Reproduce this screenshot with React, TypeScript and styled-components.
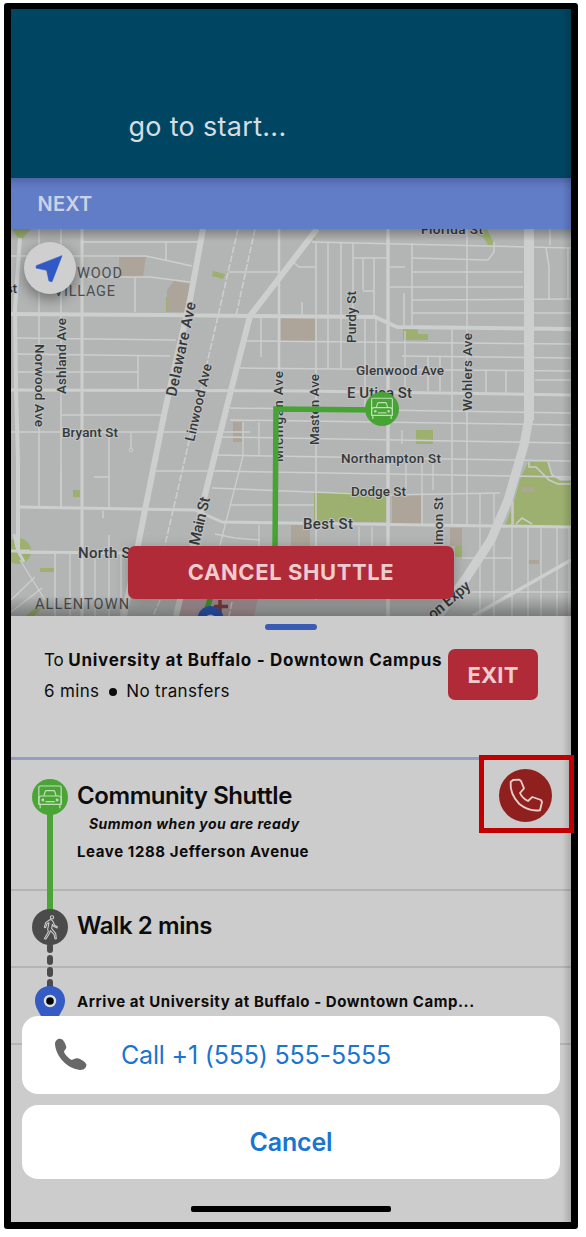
import React from 'react';
import styled, { createGlobalStyle } from 'styled-components';

const GlobalStyle = createGlobalStyle`
  * { box-sizing: border-box; }
  body {
    margin: 0;
    background: #fff;
    font-family: Inter, "Liberation Sans", sans-serif;
    color: #0c0c0c;
  }
  button { font-family: inherit; border: 0; padding: 0; margin: 0; }
`;

const Page = styled.div`
  width: 586px;
  height: 1237px;
  padding: 3px 0 0 4px;
  overflow: hidden;
`;

const Phone = styled.div`
  position: relative;
  width: 574px;
  height: 1226px;
  padding: 6px 7px;
  background: #000;
  border-radius: 3px;
`;

const Screen = styled.div`
  display: flex;
  flex-direction: column;
  width: 560px;
  height: 1213px;
  background: #ccc;
  overflow: hidden;
  position: relative;
`;

const EdgeShade = styled.div`
  position: absolute;
  inset: 0 0 0 auto;
  width: 9px;
  background: linear-gradient(to right, rgba(0, 0, 0, 0), rgba(0, 0, 0, 0.16));
  pointer-events: none;
`;

const Header = styled.header`
  flex: none;
  height: 169px;
  padding: 98px 0 0 117.5px;
  background: #004663;
  color: #d3dde2;
  font-size: 27px;
  line-height: 40px;
  letter-spacing: 0.3px;
`;

const NextBar = styled.div`
  flex: none;
  height: 51px;
  padding: 10px 0 0 26.5px;
  background: linear-gradient(#4e65a4, #5c76bd 6px, #627dc8 12px);
  color: #ccd2e6;
  font-size: 20px;
  font-weight: 600;
  line-height: 32px;
  letter-spacing: 0.2px;
`;

const MapArea = styled.section`
  position: relative;
  flex: none;
  height: 387px;
  svg { display: block; }
`;

const LocateButton = styled.button`
  position: absolute;
  left: 13px;
  top: 13px;
  width: 52px;
  height: 52px;
  border-radius: 50%;
  background: #cfcfcf;
  box-shadow: 0 5px 14px rgba(0, 0, 0, 0.4);
`;

const DangerButton = styled.button<{ $w: number; $h: number }>`
  flex: none;
  width: ${p => p.$w}px;
  height: ${p => p.$h}px;
  border-radius: 7px;
  background: #b02a37;
  color: #edccd0;
  font-size: 22px;
  font-weight: 700;
  letter-spacing: 0.1px;
`;

const CancelShuttle = styled(DangerButton)`
  position: absolute;
  left: 117px;
  top: 317px;
  padding-bottom: 1px;
  letter-spacing: 0.6px;
  box-shadow: 0 3px 14px rgba(0, 0, 0, 0.25);
`;

const Sheet = styled.section`
  display: flex;
  flex-direction: column;
  flex: 1;
  background: #ccc;
`;

const Handle = styled.div`
  flex: none;
  width: 52px;
  height: 6px;
  margin: 8px auto 0;
  border-radius: 3px;
  background: #3b5ab2;
`;

const Summary = styled.div`
  display: flex;
  flex: none;
  height: 130px;
  padding-left: 33px;
  border-bottom: 3px solid #929fbe;
`;

const SummaryText = styled.div`
  width: 404px;
  padding-top: 15px;
  white-space: nowrap;
`;

const Destination = styled.p`
  margin: 0;
  font-size: 17px;
  line-height: 31px;
  letter-spacing: -0.1px;
  b {
    font-weight: 700;
    letter-spacing: 0.7px;
  }
`;

const TripInfo = styled.p`
  display: flex;
  align-items: center;
  gap: 9.5px;
  margin: 0;
  font-size: 17px;
  line-height: 31px;
  letter-spacing: 0.33px;
`;

const Bullet = styled.i`
  width: 8px;
  height: 8px;
  border-radius: 50%;
  background: #0c0c0c;
`;

const ExitWrap = styled.div`
  padding-top: 19px;
`;

const Step = styled.div<{ $h: number }>`
  display: flex;
  flex: none;
  height: ${p => p.$h}px;
  border-bottom: 2px solid #b4b4b4;
`;

const Rail = styled.div<{ $top: number }>`
  display: flex;
  flex: none;
  flex-direction: column;
  align-items: center;
  width: 36px;
  margin-left: 21px;
  padding-top: ${p => p.$top}px;
  svg { flex: none; display: block; position: relative; z-index: 1; }
`;

const RideLine = styled.div`
  flex: none;
  width: 6px;
  height: 96px;
  margin-top: -1px;
  background: #4aa536;
`;

const WalkLine = styled.div`
  flex: none;
  display: flex;
  flex-direction: column;
  gap: 2px;
  margin-top: -2px;
  i {
    width: 6px;
    height: 10px;
    border-radius: 3px;
    background: #4b4b4b;
  }
`;

const StepText = styled.div<{ $top: number }>`
  flex: 1;
  padding: ${p => p.$top}px 0 0 9px;
  white-space: nowrap;
`;

const StepTitle = styled.h2`
  margin: 0;
  font-size: 24px;
  font-weight: 600;
  line-height: 30px;
  letter-spacing: -0.42px;
`;

const StepNote = styled.p`
  margin: 1px 0 0 12px;
  font-size: 14px;
  font-style: italic;
  font-weight: 700;
  line-height: 24px;
  letter-spacing: 0.45px;
`;

const StepPlace = styled.p`
  margin: 0;
  font-size: 15px;
  font-weight: 700;
  line-height: 24px;
  letter-spacing: 0.56px;
`;

const LeavePlace = styled(StepPlace)`
  margin-top: 4px;
  letter-spacing: 0.6px;
`;

const CallBox = styled.div`
  position: absolute;
  left: 475px;
  top: 752px;
  width: 95px;
  height: 78px;
  border: 5px solid #c00000;
`;

const CallButton = styled.button`
  display: block;
  width: 53px;
  height: 53px;
  margin: 9px 0 0 15px;
  border-radius: 50%;
  background: #8f201d;
  svg { display: block; }
`;

const ActionSheet = styled.div`
  position: absolute;
  z-index: 2;
  left: 11px;
  right: 11px;
  bottom: 10px;
  display: flex;
  flex-direction: column;
  align-items: center;
`;

const ActionButton = styled.button<{ $h: number; $bold?: boolean }>`
  display: flex;
  align-items: center;
  justify-content: ${p => (p.$bold ? 'center' : 'flex-start')};
  width: 100%;
  height: ${p => p.$h}px;
  margin-bottom: ${p => (p.$bold ? 27.5 : 11)}px;
  padding-left: ${p => (p.$bold ? 0 : 33)}px;
  border-radius: 16px;
  background: #fff;
  color: #1a74d2;
  font-size: 25px;
  font-weight: ${p => (p.$bold ? 600 : 400)};
  letter-spacing: -0.18px;
  svg { flex: none; margin-right: 34px; }
`;

const HomeBar = styled.div`
  width: 200px;
  height: 6px;
  border-radius: 2px;
  background: #000;
`;

const ROADS: [number, string][] = [
  [4, 'M20 238L15 310L16 390L18 460L18 552'],
  [1.5, 'M39 229V345M39 425V507M61 229V507M109 435V507M109 535V552M55 552V616M138 355V390M166 241V260M135 277V312M103 511V518'],
  [3, 'M82 229V616'],
  [1.5, 'M82 242H200M11 256H146L192 266M82 277H150L190 282M15 338L176 340M15 354L170 356M15 372H138M61 415H165M11 432H250M155 471H230M61 471L61 507M94 477H109'],
  [4, 'M11 314L165 315L250 316L375 317L397 327L571 329'],
  [3, 'M11 390L300 391L571 395'],
  [3, 'M18 507L195 510L222 522L290 523L571 527'],
  [3, 'M18 552L130 553'],
  [6, 'M203 229L190 300L165 410L145 510L124 616'],
  [6, 'M317 229L250 316L226 410L205 495L176 616'],
  [2.5, 'M279 229V370'],
  [1.5, 'M229 272H279M261 317V357M293 262L299 267H316M302 302V317M316 243V600M328 243V368M341 243V368M353 243V330M363 258V290M374 258V316M353 258H388M363 291H374M365 318V410M376 318V370M404 293V325M412 243V325M467 229V525M452 328V525M428 356V391M440 356V391M486 371V394M506 371V394'],
  [3.5, 'M388 229V616'],
  [1.5, 'M312 242L571 248M388 267H405M412 258L488 260L494 252V242M412 272H523M388 287H523M412 300L571 299M412 313H571M245 341L571 344M402 356L571 358M240 368L571 371M230 408L571 413M230 420L571 425M220 437L571 443M217 455L571 461M217 471L571 477M212 488L388 495L500 493M231 505H314M215 534L235 538L260 540M550 229V245M546 248L549 267V299M568 248V299M535 380H571'],
  [1.3, 'M243 422V455M259 422V456M243 456L220 545M402 430V444M406 464V492M422 464V525M433 464V490M405 331V391M259 525V546M359 527V546M372 527V546M480 493V616M494 493V616M512 493V616M528 527V616M541 527V616M557 527V616M569 527V616M462 558H512M465 592H571M70 552V616M95 552V616M109 552V616M121 552V616M55 553H18M20 560L45 600M11 600L35 577M11 612L42 588'],
  [10, 'M529 229V420'],
  [9, 'M529 418L524 445L508 500L491 540L466 578L438 616'],
  [3.5, 'M571 560L473 616'],
];

const AREAS: [string, string][] = [
  ['#9db06f', 'M12 229H31L20 241ZM213 271L225 274L223 279L212 276ZM166 297H173V312H166ZM403 328H418V334H428V340H403ZM416 430H433V444H416ZM314 492H387V522H314ZM455 540H462V557H455ZM528 462H548L551 474L560 481H571V526H505L513 505L520 480ZM40 568H54V572H40ZM73 490H80V497H73ZM26 616L34 609L42 608L34 616ZM474 233L487 229L495 245H488L484 238ZM311 240L315 234V240ZM226 609L242 610V616H226Z'],
  ['#ada59a', 'M119 257H146L143 277H119ZM174 281L190 284L185 312H167V290ZM281 318H315V341H281ZM233 422H242V442H233ZM392 494H421V525H392ZM291 525H310V546H291ZM450 528H462V546H450ZM528 560H539V564H528ZM522 487H534V492H522Z'],
  ['#b39fa3', 'M180 598H258L254 616H176Z'],
];

type Label = { t: string; x: number; y: number; w: number; r?: number; s?: number };
const LABELS: Label[] = [
  { t: 'Florida St', x: 421, y: 234, w: 62 },
  { t: 'st', x: 6, y: 293, w: 11 },
  { t: 'Ashland Ave', x: 66, y: 394, w: 76, r: -90 },
  { t: 'Norwood Ave', x: 35, y: 344, w: 83, r: 90 },
  { t: 'Delaware Ave', x: 176, y: 397, w: 96, r: -78, s: 15 },
  { t: 'Linwood Ave', x: 194, y: 442, w: 79, r: -77 },
  { t: 'Main St', x: 199, y: 546, w: 49, r: -77, s: 15 },
  { t: 'Purdy St', x: 356, y: 343, w: 52, r: -90 },
  { t: 'Michigan Ave', x: 283, y: 462, w: 91, r: -90 },
  { t: 'Masten Ave', x: 318.5, y: 445, w: 71, r: -90 },
  { t: 'Wohlers Ave', x: 472, y: 411, w: 78, r: -90 },
  { t: 'imon St', x: 443, y: 545, w: 48, r: -90 },
  { t: 'Glenwood Ave', x: 356, y: 375, w: 88 },
  { t: 'E Utica St', x: 347, y: 398, w: 65, s: 15 },
  { t: 'Bryant St', x: 62, y: 437, w: 56 },
  { t: 'Northampton St', x: 341, y: 463, w: 100 },
  { t: 'Dodge St', x: 351, y: 496, w: 55 },
  { t: 'Best St', x: 303, y: 529, w: 50, s: 15 },
  { t: 'North St', x: 78, y: 558, w: 58, s: 15 },
  { t: 'on Expy', x: 433, y: 620, w: 50, r: -40, s: 15 },
];

const VanGlyph = () => (
  <g fill="none" stroke="#c2dfba" strokeWidth="3.6" strokeLinejoin="round">
    <path d="M119 163V112q0-4 4-4h59q4 0 4 4V163" />
    <path d="M134 138l4-13q1-3 4-3h21q3 0 4 3l4 13" />
    <path d="M119 163v-17q0-8 8-8h51q8 0 8 8v17zM123 163v12M182 163v12" />
    <path d="M139 155h28" />
    <circle cx="131" cy="150" r="2.5" />
    <circle cx="174" cy="150" r="2.5" />
  </g>
);

const StreetMap = () => (
  <svg width="560" height="387" viewBox="11 229 560 387">
    <defs>
      <linearGradient id="topShade" x1="0" y1="0" x2="0" y2="1">
        <stop offset="0" stopColor="#000" stopOpacity="0.28" />
        <stop offset="1" stopColor="#000" stopOpacity="0" />
      </linearGradient>
      <linearGradient id="bottomShade" x1="0" y1="1" x2="0" y2="0">
        <stop offset="0" stopColor="#000" stopOpacity="0.32" />
        <stop offset="1" stopColor="#000" stopOpacity="0" />
      </linearGradient>
    </defs>
    <rect x="11" y="229" width="560" height="387" fill="#b3b5b5" />
    {AREAS.map(([fill, d]) => <path key={fill} d={d} fill={fill} />)}
    <circle cx="18" cy="551" r="13" fill="#9db06f" />
    {ROADS.map(([w, d]) => <path key={d} d={d} fill="none" stroke="#cdcece" strokeWidth={w} strokeLinejoin="round" />)}
    <path d="M238 229L218 316L165 545M255 229L236 316M160 600L153 616M232 602L229 616" fill="none" stroke="#cdcece" strokeWidth="1.6" strokeDasharray="7 2" />
    <path d="M529 462V467H536L549 480L558 484H571M516 524L522 518L532 524M513 502V524M548 462L552 475L560 479H571" fill="none" stroke="#cbcccc" strokeWidth="1.5" />
    <path d="M14 534L17 548M8 551H30M18 551L24 562" stroke="#cbcccc" strokeWidth="3" />
    <circle cx="131" cy="450" r="1.8" fill="none" stroke="#cdcece" />
    <path d="M131 433V448" stroke="#cdcece" strokeWidth="1.3" />
    <g fontFamily="Roboto, sans-serif" fontWeight="500" fill="#34383a" stroke="#c1c3c3" strokeWidth="2" paintOrder="stroke">
      {LABELS.map(l => (
        <text key={l.t} fontSize={l.s ?? 13.5} textLength={l.w} transform={`translate(${l.x} ${l.y}) rotate(${l.r ?? 0})`}>{l.t}</text>
      ))}
    </g>
    <g fontFamily="Roboto, sans-serif" fontSize="14.5" fill="#4c4f51">
      <text x="77" y="278" textLength="45">WOOD</text>
      <text x="54" y="296" textLength="61">VILLAGE</text>
      <text x="35" y="609" textLength="94">ALLENTOWN</text>
    </g>
    <path d="M275 552L276 409L382 410M211 596L206 612" fill="none" stroke="#47a334" strokeWidth="5.5" />
    <path d="M220 600V612M214 606.500H228" stroke="#884047" strokeWidth="3.500" />
    <circle cx="210.500" cy="619" r="13" fill="#3159bd" />
    <circle cx="210.500" cy="620" r="5.500" fill="#d6d9e3" />
    <circle cx="382" cy="409" r="17" fill="#47a334" />
    <g transform="translate(382 408.500) scale(0.310) translate(-152.500 -141)"><VanGlyph /></g>
    <rect x="11" y="229" width="560" height="12" fill="url(#topShade)" />
    <rect x="11" y="596" width="560" height="20" fill="url(#bottomShade)" />
  </svg>
);

const VanIcon = () => (
  <svg width="36" height="36" viewBox="96 87 108 108">
    <circle cx="150" cy="141" r="54" fill="#4aa536" />
    <g transform="translate(-2.500 0)"><VanGlyph /></g>
  </svg>
);

const WalkIcon = () => (
  <svg width="36" height="36" viewBox="96 88 108 108">
    <circle cx="150" cy="142" r="54" fill="#4b4b4b" />
    <g fill="none" stroke="#cfcfcf" strokeWidth="3.200" strokeLinejoin="round" strokeLinecap="round">
      <circle cx="156" cy="113" r="5" />
      <path d="M148 121L137 129L133 143L137 144L141 132L147 129L143 149L145 156L133 177L138 178L149 160L151 153L162 164L165 178L169 177L167 161L155 147L157 134L161 140L171 145L172 141L164 137L158 124Q153 118 148 121Z" />
    </g>
  </svg>
);

const PinIcon = () => (
  <svg width="30" height="38" viewBox="0 0 30 38">
    <path d="M15 0C6 0 0 6.500 0 14.500C0 21 3 24 6 30L15 38L24 30C27 24 30 21 30 14.500C30 6.500 24 0 15 0Z" fill="#345cc4" />
    <circle cx="15" cy="15" r="6.200" fill="#dde0e6" />
    <circle cx="15" cy="15" r="3.800" fill="#000" />
  </svg>
);

export default function App() {
  return (
    <Page>
      <GlobalStyle />
      <Phone>
        <Screen>
          <Header>go to start...</Header>
          <NextBar>NEXT</NextBar>
          <MapArea>
            <StreetMap />
            <LocateButton aria-label="Locate">
              <svg width="52" height="52" viewBox="72 67 156 156">
                <path d="M186 108L109 138L108 145L140 152L147 184L156 186Z" fill="#3059c6" stroke="#3059c6" strokeWidth="2" strokeLinejoin="round" />
              </svg>
            </LocateButton>
            <CancelShuttle $w={326} $h={53}>CANCEL SHUTTLE</CancelShuttle>
          </MapArea>
          <Sheet>
            <Handle />
            <Summary>
              <SummaryText>
                <Destination>To <b>University at Buffalo - Downtown Campus</b></Destination>
                <TripInfo><span>6 mins</span><Bullet /><span>No transfers</span></TripInfo>
              </SummaryText>
              <ExitWrap><DangerButton $w={90} $h={51}>EXIT</DangerButton></ExitWrap>
            </Summary>
            <Step $h={131}>
              <Rail $top={19}><VanIcon /><RideLine /></Rail>
              <StepText $top={21}>
                <StepTitle>Community Shuttle</StepTitle>
                <StepNote>Summon when you are ready</StepNote>
                <LeavePlace>Leave 1288 Jefferson Avenue</LeavePlace>
              </StepText>
            </Step>
            <Step $h={77}>
              <Rail $top={18}><WalkIcon /><WalkLine><i /><i /><i /><i /></WalkLine></Rail>
              <StepText $top={20}><StepTitle>Walk 2 mins</StepTitle></StepText>
            </Step>
            <Step $h={77}>
              <Rail $top={18}><PinIcon /></Rail>
              <StepText $top={22}><StepPlace>Arrive at University at Buffalo - Downtown Camp...</StepPlace></StepText>
            </Step>
          </Sheet>
          <EdgeShade />
          <ActionSheet>
            <ActionButton $h={78}>
              <svg width="32" height="33" viewBox="165 117 96 99">
                <path d="M180 119C172 119 165 125 165 136C168 175 204 210 240 213C252 214 260 206 259 196C255 188 242 180 232 178C225 177 221 182 215 183C205 178 197 169 192 159C192 154 199 151 199 144C197 134 190 119 180 119Z" fill="#686868" />
              </svg>
              Call +1 (555) 555-5555
            </ActionButton>
            <ActionButton $h={74} $bold>Cancel</ActionButton>
            <HomeBar />
          </ActionSheet>
        </Screen>
        <CallBox>
          <CallButton aria-label="Call">
            <svg width="53" height="53" viewBox="177 88 159 159">
              <path d="M212 127L219 121L238 120L243 124L252 146L240 160Q247 176 264 184L277 172L303 181L306 187L300 212Q267 216 238 193Q209 163 212 127Z" fill="none" stroke="#e6cfce" strokeWidth="5.500" strokeLinejoin="round" />
            </svg>
          </CallButton>
        </CallBox>
      </Phone>
    </Page>
  );
}
